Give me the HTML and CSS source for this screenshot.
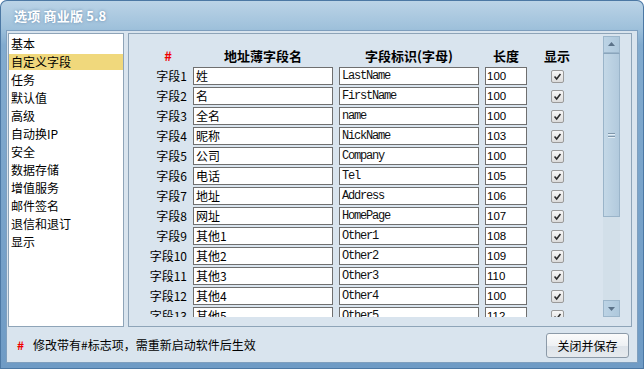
FILE: index.html
```html
<!DOCTYPE html>
<html lang="zh-CN">
<head>
<meta charset="utf-8">
<title>选项 商业版 5.8</title>
<link rel="stylesheet" href="styles.css">
</head>
<body>
<div class="window">
  <div class="titlebar"><span class="title">选项 商业版 5.8</span></div>
  <div class="client">
    <div class="main">
      <ul class="nav">
        <li>基本</li>
        <li class="active">自定义字段</li>
        <li>任务</li>
        <li>默认值</li>
        <li>高级</li>
        <li>自动换IP</li>
        <li>安全</li>
        <li>数据存储</li>
        <li>增值服务</li>
        <li>邮件签名</li>
        <li>退信和退订</li>
        <li>显示</li>
      </ul>
      <div class="panel">
        <div class="scroll">
          <div class="grid">
            <div class="hd hash">#</div>
            <div class="hd">地址薄字段名</div>
            <div class="hd">字段标识(字母)</div>
            <div class="hd">长度</div>
            <div class="hd">显示</div>

            <div class="lbl">字段1</div><div class="inp">姓</div><div class="inp mono">LastName</div><div class="inp num">100</div><div class="chkcell"><span class="chk"><svg viewBox="0 0 13 13"><path d="M3 6.5 L5.5 9.5 L10 3.5" /></svg></span></div>
            <div class="lbl">字段2</div><div class="inp">名</div><div class="inp mono">FirstName</div><div class="inp num">100</div><div class="chkcell"><span class="chk"><svg viewBox="0 0 13 13"><path d="M3 6.5 L5.5 9.5 L10 3.5" /></svg></span></div>
            <div class="lbl">字段3</div><div class="inp">全名</div><div class="inp mono">name</div><div class="inp num">100</div><div class="chkcell"><span class="chk"><svg viewBox="0 0 13 13"><path d="M3 6.5 L5.5 9.5 L10 3.5" /></svg></span></div>
            <div class="lbl">字段4</div><div class="inp">昵称</div><div class="inp mono">NickName</div><div class="inp num">103</div><div class="chkcell"><span class="chk"><svg viewBox="0 0 13 13"><path d="M3 6.5 L5.5 9.5 L10 3.5" /></svg></span></div>
            <div class="lbl">字段5</div><div class="inp">公司</div><div class="inp mono">Company</div><div class="inp num">100</div><div class="chkcell"><span class="chk"><svg viewBox="0 0 13 13"><path d="M3 6.5 L5.5 9.5 L10 3.5" /></svg></span></div>
            <div class="lbl">字段6</div><div class="inp">电话</div><div class="inp mono">Tel</div><div class="inp num">105</div><div class="chkcell"><span class="chk"><svg viewBox="0 0 13 13"><path d="M3 6.5 L5.5 9.5 L10 3.5" /></svg></span></div>
            <div class="lbl">字段7</div><div class="inp">地址</div><div class="inp mono">Address</div><div class="inp num">106</div><div class="chkcell"><span class="chk"><svg viewBox="0 0 13 13"><path d="M3 6.5 L5.5 9.5 L10 3.5" /></svg></span></div>
            <div class="lbl">字段8</div><div class="inp">网址</div><div class="inp mono">HomePage</div><div class="inp num">107</div><div class="chkcell"><span class="chk"><svg viewBox="0 0 13 13"><path d="M3 6.5 L5.5 9.5 L10 3.5" /></svg></span></div>
            <div class="lbl">字段9</div><div class="inp">其他1</div><div class="inp mono">Other1</div><div class="inp num">108</div><div class="chkcell"><span class="chk"><svg viewBox="0 0 13 13"><path d="M3 6.5 L5.5 9.5 L10 3.5" /></svg></span></div>
            <div class="lbl">字段10</div><div class="inp">其他2</div><div class="inp mono">Other2</div><div class="inp num">109</div><div class="chkcell"><span class="chk"><svg viewBox="0 0 13 13"><path d="M3 6.5 L5.5 9.5 L10 3.5" /></svg></span></div>
            <div class="lbl">字段11</div><div class="inp">其他3</div><div class="inp mono">Other3</div><div class="inp num">110</div><div class="chkcell"><span class="chk"><svg viewBox="0 0 13 13"><path d="M3 6.5 L5.5 9.5 L10 3.5" /></svg></span></div>
            <div class="lbl">字段12</div><div class="inp">其他4</div><div class="inp mono">Other4</div><div class="inp num">100</div><div class="chkcell"><span class="chk"><svg viewBox="0 0 13 13"><path d="M3 6.5 L5.5 9.5 L10 3.5" /></svg></span></div>
            <div class="lbl">字段13</div><div class="inp">其他5</div><div class="inp mono">Other5</div><div class="inp num">112</div><div class="chkcell"><span class="chk"><svg viewBox="0 0 13 13"><path d="M3 6.5 L5.5 9.5 L10 3.5" /></svg></span></div>
          </div>
        </div>
        <div class="scrollbar">
          <div class="sb-btn"><svg viewBox="0 0 15 15"><path d="M4 9 L7.5 5 L11 9 Z" /></svg></div>
          <div class="sb-thumb"><span class="grip"></span><span class="grip"></span></div>
          <div class="sb-track"></div>
          <div class="sb-btn"><svg viewBox="0 0 15 15"><path d="M4 6 L7.5 10 L11 6 Z" /></svg></div>
        </div>
      </div>
    </div>
    <div class="footer">
      <span class="note"><span class="hash">#</span>修改带有#标志项，需重新启动软件后生效</span>
      <button class="btn">关闭并保存</button>
    </div>
  </div>
</div>
</body>
</html>
```

FILE: styles.css
```css
* { box-sizing: border-box; }
html, body { margin: 0; padding: 0; background: #ffffff; }
body {
  font-family: "Noto Sans CJK SC", "Liberation Sans", sans-serif;
  font-size: 12px;
  color: #000;
}
.window {
  width: 644px;
  height: 369px;
  display: flex;
  flex-direction: column;
  border-radius: 7px 7px 0 0;
  background: linear-gradient(to bottom, #bcd4e7 0, #9fc1db 28px, #82abcf 45px, #6f9bc5 100%);
  box-shadow: inset 0 0 0 1px #4c78a4;
  overflow: hidden;
}
.titlebar {
  height: 30px;
  flex: none;
  display: flex;
  align-items: center;
  padding-left: 14px;
}
.title {
  color: #ffffff;
  font-weight: bold;
  font-size: 13px;
  letter-spacing: 0.2px;
  text-shadow: 0 0 3px rgba(60, 100, 140, 0.6);
}
.client {
  flex: 1;
  margin: 0 6px 6px 6px;
  border: 1px solid #7f9fbe;
  background: #d9e4ee;
  padding-top: 2px;
  display: flex;
  flex-direction: column;
}
.main {
  height: 294px;
  flex: none;
  display: flex;
  gap: 4px;
  padding-left: 1px;
}
.nav {
  list-style: none;
  margin: 0;
  padding: 2px 0 0 0;
  width: 116px;
  flex: none;
  background: #ffffff;
  border: 1px solid #8ea4b8;
}
.nav li {
  height: 16px;
  line-height: 16px;
  margin-bottom: 2px;
  padding-left: 2px;
  white-space: nowrap;
}
.nav li.active { background: #f0d87c; }
.panel {
  width: 504px;
  flex: none;
  border: 1px solid #8ea4b8;
  padding: 2px 11px 9px 0;
  display: flex;
}
.scroll {
  flex: 1;
  overflow: hidden;
  height: 281px;
}
.grid {
  display: grid;
  grid-template-columns: 58px 140px 140px 42px 48px;
  grid-auto-rows: 18px;
  column-gap: 6px;
  row-gap: 2px;
  padding-top: 11px;
}
.hd {
  font-weight: bold;
  font-size: 13px;
  text-align: center;
  line-height: 18px;
}
.hd.hash { text-align: right; padding-right: 15px; color: #f00000; }
.lbl {
  text-align: right;
  line-height: 18px;
  padding-right: 0;
  white-space: nowrap;
}
.inp {
  background: #ffffff;
  border: 1px solid #6f6f6f;
  padding-left: 2px;
  line-height: 16px;
  white-space: nowrap;
  overflow: hidden;
}
.inp.mono {
  font-family: "Liberation Mono", monospace;
  font-size: 12px;
  letter-spacing: -1.2px;
  color: #111;
}
.inp.num {
  font-family: "Liberation Sans", sans-serif;
  font-size: 11.5px;
  padding-left: 1px;
}
.chkcell {
  display: flex;
  align-items: center;
  justify-content: center;
}
.chk {
  width: 13px;
  height: 13px;
  border: 1px solid #9a9a9a;
  border-radius: 2px;
  background: linear-gradient(to bottom, #f7f7f7, #dcdcdc);
  display: block;
}
.chk svg { display: block; width: 11px; height: 11px; }
.chk path { fill: none; stroke: #2c2c2c; stroke-width: 1.8; }
.scrollbar {
  width: 17px;
  height: 281px;
  flex: none;
  display: flex;
  flex-direction: column;
}
.sb-btn {
  height: 17px;
  flex: none;
  background: linear-gradient(to right, #bcd3e5, #aec8dc);
  border: 1px solid #9cb6cb;
}
.sb-btn svg { display: block; width: 15px; height: 15px; }
.sb-btn path { fill: #5b7289; }
.sb-thumb {
  height: 164px;
  flex: none;
  background: linear-gradient(to right, #c4d8e7, #b2cadd);
  border: 1px solid #9ab4c9;
  border-top-color: #8aa5bc;
  display: flex;
  flex-direction: column;
  justify-content: center;
  align-items: center;
  gap: 2px;
}
.grip {
  display: block;
  width: 7px;
  height: 1px;
  background: #7f97ab;
  box-shadow: 0 1px 0 #e4eef5;
}
.sb-track {
  flex: 1;
  background: #d2dfe9;
}
.footer {
  flex: 1;
  display: flex;
  align-items: center;
  justify-content: space-between;
  padding: 0 8px 0 10px;
}
.note { white-space: nowrap; }
.note .hash {
  color: #f00000;
  font-weight: bold;
  margin-right: 9px;
}
.btn {
  width: 83px;
  height: 25px;
  margin-top: 1px;
  font-family: "Noto Sans CJK SC", "Liberation Sans", sans-serif;
  font-size: 12px;
  color: #000;
  border: 1px solid #8c9aa8;
  border-radius: 3px;
  background: linear-gradient(to bottom, #fbfbfb 0, #eef1f4 50%, #dde3e9 51%, #e6eaee 100%);
  padding: 0;
}
```
